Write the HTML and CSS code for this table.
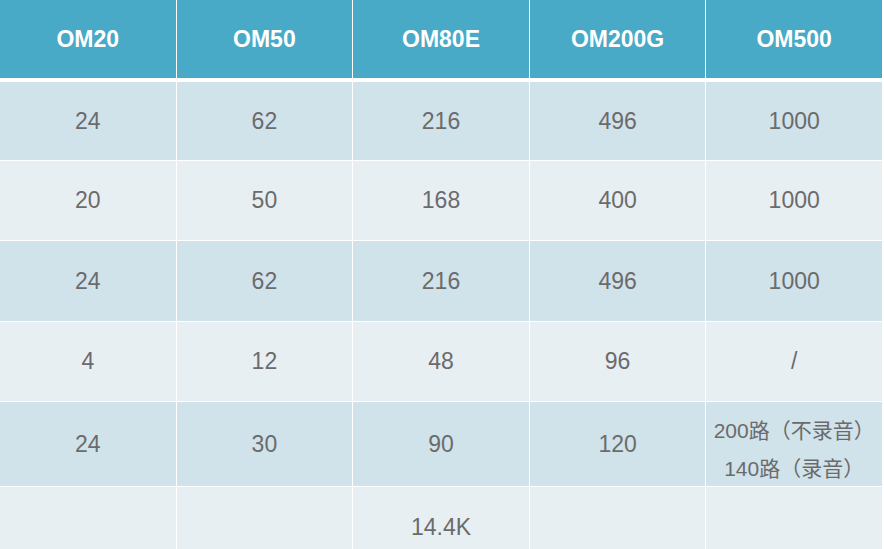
FILE: index.html
```html
<!DOCTYPE html>
<html>
<head>
<meta charset="utf-8">
<link rel="stylesheet" href="styles.css">
</head>
<body>
<div class="spec">
  <div class="cell head">OM20</div>
  <div class="cell head">OM50</div>
  <div class="cell head">OM80E</div>
  <div class="cell head">OM200G</div>
  <div class="cell head">OM500</div>

  <div class="cell dark first">24</div>
  <div class="cell dark first">62</div>
  <div class="cell dark first">216</div>
  <div class="cell dark first">496</div>
  <div class="cell dark first">1000</div>

  <div class="cell light">20</div>
  <div class="cell light">50</div>
  <div class="cell light">168</div>
  <div class="cell light">400</div>
  <div class="cell light">1000</div>

  <div class="cell dark third">24</div>
  <div class="cell dark third">62</div>
  <div class="cell dark third">216</div>
  <div class="cell dark third">496</div>
  <div class="cell dark third">1000</div>

  <div class="cell light">4</div>
  <div class="cell light">12</div>
  <div class="cell light">48</div>
  <div class="cell light">96</div>
  <div class="cell light">/</div>

  <div class="cell dark tall">24</div>
  <div class="cell dark tall">30</div>
  <div class="cell dark tall">90</div>
  <div class="cell dark tall">120</div>
  <div class="cell dark tall multi">200路（不录音）<br>140路（录音）</div>

  <div class="cell light last"></div>
  <div class="cell light last"></div>
  <div class="cell light last">14.4K</div>
  <div class="cell light last"></div>
  <div class="cell light last"></div>
</div>
</body>
</html>
```

FILE: styles.css
```css
html, body {
  margin: 0;
  padding: 0;
  background: #ffffff;
}
.spec {
  width: 882px;
  display: grid;
  grid-template-columns: repeat(5, 1fr);
  column-gap: 1px;
  row-gap: 1px;
  background: #ffffff;
  font-family: "Liberation Sans", Arial, "Noto Sans CJK SC", sans-serif;
}
.cell {
  display: flex;
  align-items: center;
  justify-content: center;
  text-align: center;
  height: 79px;
  font-size: 23px;
  color: #6b6b6b;
}
.head {
  height: 78px;
  margin-bottom: 3px;
  background: #48aac6;
  color: #ffffff;
  font-weight: bold;
  font-size: 23px;
}
.dark { background: #d0e2ea; }
.light { background: #e8eff3; }
.first { height: 78px; }
.third { height: 80px; }
.tall { height: 84px; }
.multi {
  box-sizing: border-box;
  padding-top: 12px;
  font-family: "Liberation Sans", Arial, "Noto Sans CJK TC", sans-serif;
  font-size: 21px;
  line-height: 38px;
}
.last { height: 80px; }
```
